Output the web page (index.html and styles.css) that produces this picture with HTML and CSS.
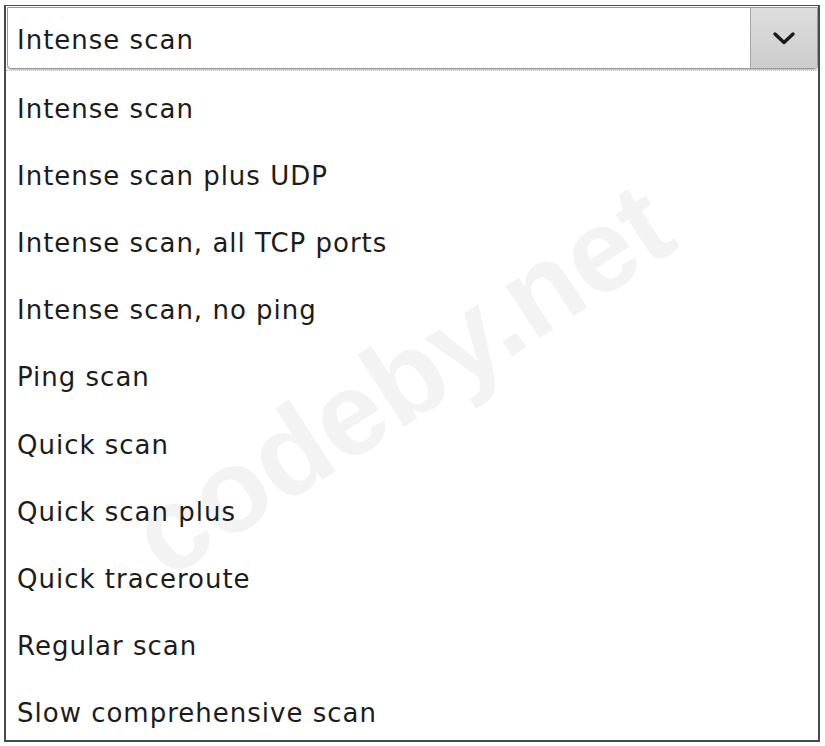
FILE: index.html
```html
<!DOCTYPE html>
<html>
<head>
<meta charset="utf-8">
<link rel="stylesheet" href="styles.css">
</head>
<body>
<div class="frame">
  <div class="watermark">codeby.net</div>
  <div class="combo">
    <div class="combo-value">Intense scan</div>
    <div class="combo-button">
      <svg width="24" height="16" viewBox="0 0 24 16"><path d="M3 4 L12 12.5 L21 4" fill="none" stroke="#1a1a1a" stroke-width="3.4" stroke-linecap="round" stroke-linejoin="round"/></svg>
    </div>
  </div>
  <div class="list">
    <div class="item">Intense scan</div>
    <div class="item">Intense scan plus UDP</div>
    <div class="item">Intense scan, all TCP ports</div>
    <div class="item">Intense scan, no ping</div>
    <div class="item">Ping scan</div>
    <div class="item">Quick scan</div>
    <div class="item">Quick scan plus</div>
    <div class="item">Quick traceroute</div>
    <div class="item">Regular scan</div>
    <div class="item">Slow comprehensive scan</div>
  </div>
</div>
</body>
</html>
```
FILE: styles.css
```css
html, body {
  margin: 0;
  padding: 0;
  background: #ffffff;
}
body {
  font-family: "DejaVu Sans", "Noto Sans", sans-serif;
  color: #1c1c1c;
}
.frame {
  position: relative;
  overflow: hidden;
  box-sizing: border-box;
  margin: 5px 0 0 4px;
  width: 816px;
  height: 737px;
  border: 2px solid #4a4a4a;
  border-top-width: 1px;
  display: flex;
  flex-direction: column;
}
.combo {
  position: relative;
  z-index: 1;
  flex-shrink: 0;
  box-sizing: border-box;
  margin: 1px 0 0 1px;
  height: 62px;
  display: flex;
  border: 1px solid #9a9a9a;
  border-radius: 0 0 4px 4px;
  box-shadow: 0 1px 1px rgba(0,0,0,0.25);
  background: #fff;
}
.combo-value {
  flex: 1;
  display: flex;
  align-items: center;
  padding-left: 9px;
  padding-top: 4px;
  font-size: 26px;
  letter-spacing: 1px;
}
.combo-button {
  width: 66px;
  display: flex;
  align-items: center;
  justify-content: center;
  border-left: 1px solid #a8a8a8;
  background: linear-gradient(#dedede, #cdcdcd);
  border-radius: 0 0 4px 0;
}
.list {
  position: relative;
  z-index: 1;
  flex-shrink: 0;
  margin-top: 1px;
  border-top: 1px dotted #c4c4c4;
  display: flex;
  flex-direction: column;
  padding-top: 4px;
}
.item {
  flex-shrink: 0;
  height: 67.2px;
  display: flex;
  align-items: center;
  padding-left: 11px;
  font-size: 26px;
  letter-spacing: 1px;
}
.watermark {
  position: absolute;
  z-index: 0;
  left: 170px;
  top: 472px;
  line-height: 1;
  font-family: "Liberation Sans", sans-serif;
  font-weight: bold;
  font-size: 118px;
  color: #f3f3f3;
  white-space: nowrap;
  transform: rotate(-33deg);
  transform-origin: 0 100%;
  pointer-events: none;
}
```
